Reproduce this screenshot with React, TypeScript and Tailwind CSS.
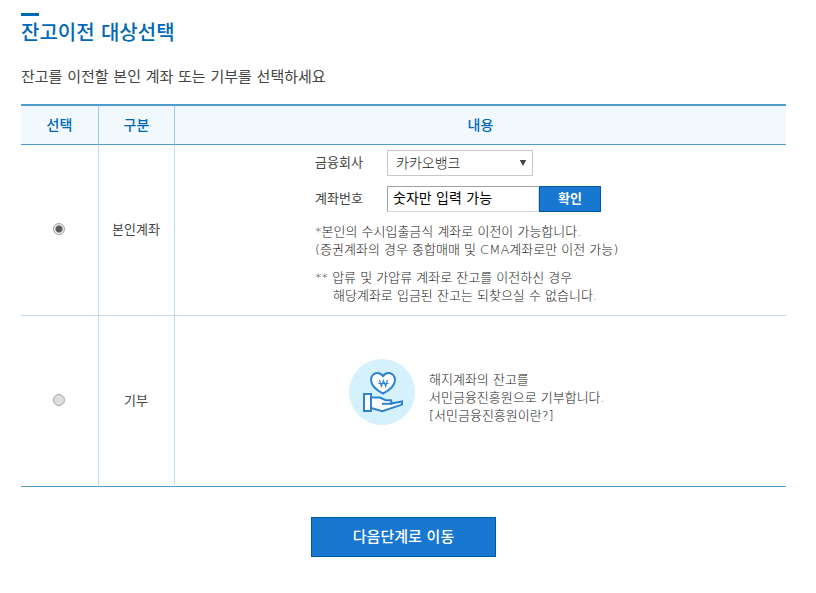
import { useState } from "react";

const fontClass = "font-['DejaVu_Sans','Noto_Sans_CJK_KR',sans-serif]";

function DonationIcon() {
  return (
    <svg width="66" height="66" viewBox="0 0 66 66" fill="none" className="shrink-0" aria-hidden="true">
      <circle cx="33" cy="33" r="33" fill="#d4f1fd" />
      <path
        d="M34 34.5C29 32 22 27.2 22 20.8C22 16.8 25 14 28.4 14C30.9 14 32.9 15.3 34 17.2C35.1 15.3 37.1 14 39.6 14C43 14 46 16.8 46 20.8C46 27.2 39 32 34 34.5Z"
        fill="#fff"
        stroke="#2d83d2"
        strokeWidth="2"
        strokeLinejoin="round"
      />
      <path
        d="M30.5 21L32.3 27.4L34.5 21.6L36.7 27.4L38.5 21M29.5 24.5H39.5"
        stroke="#2d83d2"
        strokeWidth="1.2"
      />
      <path
        d="M22 38.5H31L36.5 41.2H42.2V44.6L53 42.4V45.6L33.2 52.2L22 49Z"
        fill="#fff"
        stroke="#2d83d2"
        strokeWidth="2"
        strokeLinejoin="miter"
      />
      <path d="M33 44.8H43.5" stroke="#2d83d2" strokeWidth="2" />
      <rect x="15" y="35" width="7" height="17" fill="#fff" stroke="#2d83d2" strokeWidth="2" />
    </svg>
  );
}

const radioClass =
  "block mx-auto size-3 appearance-none rounded-full border border-[#a6a6a6] bg-[#dedede] checked:bg-[radial-gradient(circle,#5c5c5c_0_3px,#e6e6e6_4px)]";

export default function App() {
  const [target, setTarget] = useState("own");

  return (
    <main className={`${fontClass} bg-white pl-[21px] pr-[30px] pt-[13px] pb-9 text-[13px] leading-[18px] text-[#444]`}>
      <div className="h-[3px] w-[18px] bg-[#0068b7]" />
      <h1 className="text-[20px] leading-[34px] font-medium text-[#0068b7]">잔고이전 대상선택</h1>
      <p className="mt-[14px] text-[15px] leading-[26px]">잔고를 이전할 본인 계좌 또는 기부를 선택하세요</p>

      <table className="mt-[14px] w-full table-fixed border-separate border-spacing-0 border-t-2 border-t-[#4f9bcf]">
        <colgroup>
          <col className="w-[78px]" />
          <col className="w-[76px]" />
          <col />
        </colgroup>
        <thead>
          <tr className="h-[39px] bg-[#f1f9ff] text-[14px] text-[#0068b7]">
            <th className="border-r border-b border-r-[#99cdf5] border-b-[#4f9bcf] p-0 font-medium">선택</th>
            <th className="border-r border-b border-r-[#99cdf5] border-b-[#4f9bcf] p-0 font-medium">구분</th>
            <th className="border-b border-b-[#4f9bcf] p-0 font-medium">내용</th>
          </tr>
        </thead>
        <tbody>
          <tr className="h-[171px]">
            <td className="border-r border-b border-[#c3dcef] p-0 pr-px pb-[2px]">
              <input
                id="own"
                type="radio"
                name="target"
                className={radioClass}
                checked={target === "own"}
                onChange={() => setTarget("own")}
              />
            </td>
            <td className="border-r border-b border-[#c3dcef] p-0 pr-px text-center">
              <label htmlFor="own">본인계좌</label>
            </td>
            <td className="border-b border-[#c3dcef] p-0 pb-[5px]">
              <div className="mx-auto w-[331px]">
                <div className="flex h-[26px] items-center">
                  <label htmlFor="bank" className="w-[72px]">금융회사</label>
                  <div className="relative">
                    <select
                      id="bank"
                      className="h-[26px] w-[146px] appearance-none rounded-none border border-[#c8c8c8] bg-white pl-2 text-[14px] font-light text-[#222]"
                    >
                      <option>카카오뱅크</option>
                    </select>
                    <svg
                      width="8"
                      height="6"
                      viewBox="0 0 8 6"
                      className="pointer-events-none absolute top-[10px] right-[6px]"
                      aria-hidden="true"
                    >
                      <path d="M0.8 0H7.2L4 6Z" fill="#444" />
                    </svg>
                  </div>
                </div>
                <div className="mt-[10px] flex h-[26px] items-center">
                  <label htmlFor="account" className="w-[72px]">계좌번호</label>
                  <input
                    id="account"
                    type="text"
                    defaultValue="숫자만 입력 가능"
                    className="h-[26px] w-[152px] rounded-none border border-[#d9d9d9] border-t-[#a0a0a0] border-l-[#a0a0a0] bg-white px-[5px] pb-1 text-[14px] text-black outline-none"
                  />
                  <button type="button" className="h-[26px] w-[62px] border border-[#005aa0] bg-[#1877d1] font-bold text-white">
                    확인
                  </button>
                </div>
                <p className="mt-[11px] font-light text-[#222]">
                  *본인의 수시입출금식 계좌로 이전이 가능합니다.
                  <br />
                  (증권계좌의 경우 종합매매 및 CMA계좌로만 이전 가능)
                </p>
                <p className="mt-[10px] pl-[18px] -indent-[18px] font-light text-[#222]">
                  ** 압류 및 가압류 계좌로 잔고를 이전하신 경우
                  <br />
                  <span className="block indent-0">해당계좌로 입금된 잔고는 되찾으실 수 없습니다.</span>
                </p>
              </div>
            </td>
          </tr>
          <tr className="h-[171px]">
            <td className="border-r border-b border-r-[#c3dcef] border-b-[#4f9bcf] p-0 pr-px pb-[2px]">
              <input
                id="donate"
                type="radio"
                name="target"
                className={radioClass}
                checked={target === "donate"}
                onChange={() => setTarget("donate")}
              />
            </td>
            <td className="border-r border-b border-r-[#c3dcef] border-b-[#4f9bcf] p-0 pr-px text-center">
              <label htmlFor="donate">기부</label>
            </td>
            <td className="border-b border-b-[#4f9bcf] p-0 pb-[18px]">
              <div className="mx-auto flex w-[263px] items-center gap-[14px]">
                <DonationIcon />
                <p className="pt-3 font-light whitespace-nowrap text-[#222]">
                  해지계좌의 잔고를
                  <br />
                  서민금융진흥원으로 기부합니다.
                  <br />
                  <a href="#about">[서민금융진흥원이란?]</a>
                </p>
              </div>
            </td>
          </tr>
        </tbody>
      </table>

      <button
        type="button"
        className="mx-auto mt-[30px] block h-10 w-[185px] border border-[#005aa0] bg-[#1877d1] text-[15px] font-medium text-white"
      >
        다음단계로 이동
      </button>
    </main>
  );
}
